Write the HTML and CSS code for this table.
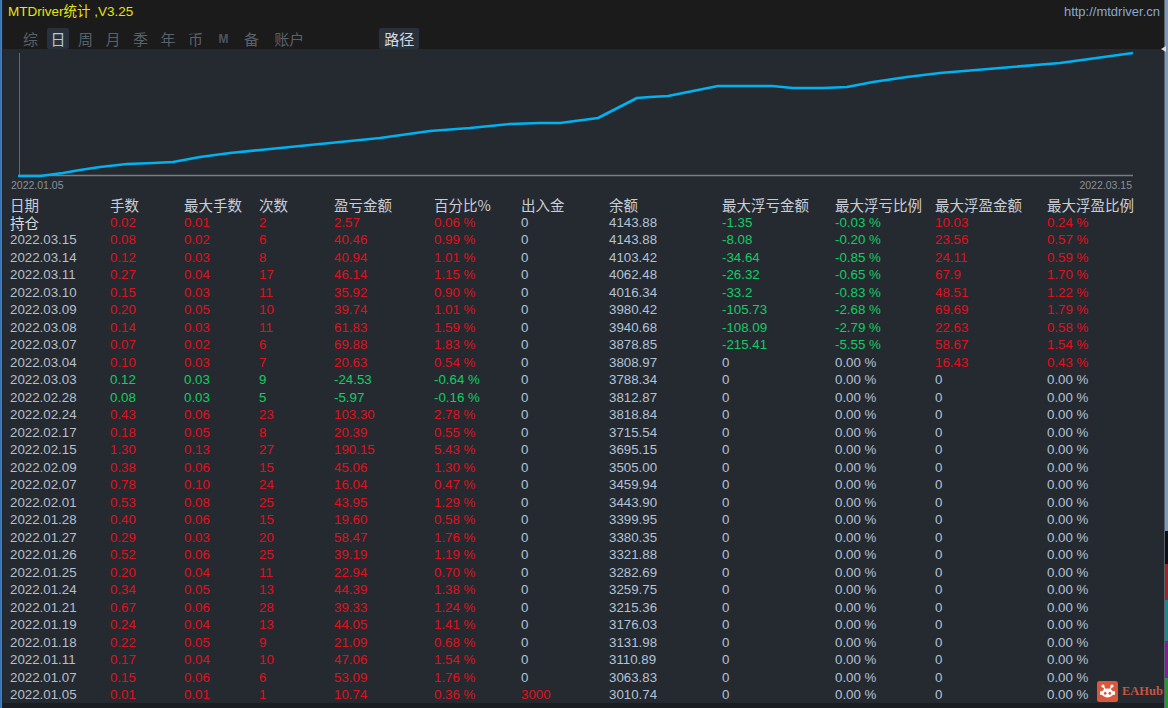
FILE: index.html
```html
<!DOCTYPE html>
<html lang="zh">
<head>
<meta charset="utf-8">
<title>MTDriver统计</title>
<link rel="stylesheet" href="styles.css">
</head>
<body>
<div class="frame">
  <div class="edge-left"></div>
  <div class="main">
    <div class="topbar">
      <span class="title">MTDriver统计 ,V3.25</span>
      <span class="url">http://mtdriver.cn</span>
    </div>
    <div class="tabs">
      <span class="tab">综</span>
      <span class="tab active">日</span>
      <span class="tab">周</span>
      <span class="tab">月</span>
      <span class="tab">季</span>
      <span class="tab">年</span>
      <span class="tab">币</span>
      <span class="tab tab-m">M</span>
      <span class="tab tab-bei">备</span>
      <span class="tab tab-acct">账户</span>
      <span class="tab tab-path">路径</span>
    </div>
    <div class="chart">
      <svg class="chart-svg" width="1161" height="146.75" viewBox="3 49 1161 146.75">
        <line x1="19.5" y1="53" x2="19.5" y2="176" stroke="#666a6e" stroke-width="1"/>
        <line x1="19" y1="175.5" x2="1133" y2="175.5" stroke="#7a7c80" stroke-width="1.6"/>
        <polyline fill="none" stroke="#00b2f0" stroke-width="2.7" stroke-linejoin="round"
          points="18,176 40,176 63,173 80,170 100,167 127,164 153,163 173,162 200,157 230,153 260,150 300,146 340,142 380,138 430,131 470,128 510,124 540,123 560,123 598,118 637,98 650,97 668,96 683,93 718,86 772,86 793,88 823,88 847,87 873,82 907,77 940,73 1000,68 1060,63 1133,53"/>
        <text class="axis-label" x="11" y="188.5">2022.01.05</text>
        <text class="axis-label" x="1132" y="188.5" text-anchor="end">2022.03.15</text>
      </svg>
    </div>
    <div class="table">
      <div class="row head">
        <span>日期</span><span>手数</span><span>最大手数</span><span>次数</span><span>盈亏金额</span><span>百分比%</span><span>出入金</span><span>余额</span><span>最大浮亏金额</span><span>最大浮亏比例</span><span>最大浮盈金额</span><span>最大浮盈比例</span>
      </div>
      <div class="row"><span class="lbl">持仓</span><span class="r">0.02</span><span class="r">0.01</span><span class="r">2</span><span class="r">2.57</span><span class="r">0.06 %</span><span class="n">0</span><span class="n">4143.88</span><span class="g">-1.35</span><span class="g">-0.03 %</span><span class="r">10.03</span><span class="r">0.24 %</span></div>
      <div class="row"><span class="d">2022.03.15</span><span class="r">0.08</span><span class="r">0.02</span><span class="r">6</span><span class="r">40.46</span><span class="r">0.99 %</span><span class="n">0</span><span class="n">4143.88</span><span class="g">-8.08</span><span class="g">-0.20 %</span><span class="r">23.56</span><span class="r">0.57 %</span></div>
      <div class="row"><span class="d">2022.03.14</span><span class="r">0.12</span><span class="r">0.03</span><span class="r">8</span><span class="r">40.94</span><span class="r">1.01 %</span><span class="n">0</span><span class="n">4103.42</span><span class="g">-34.64</span><span class="g">-0.85 %</span><span class="r">24.11</span><span class="r">0.59 %</span></div>
      <div class="row"><span class="d">2022.03.11</span><span class="r">0.27</span><span class="r">0.04</span><span class="r">17</span><span class="r">46.14</span><span class="r">1.15 %</span><span class="n">0</span><span class="n">4062.48</span><span class="g">-26.32</span><span class="g">-0.65 %</span><span class="r">67.9</span><span class="r">1.70 %</span></div>
      <div class="row"><span class="d">2022.03.10</span><span class="r">0.15</span><span class="r">0.03</span><span class="r">11</span><span class="r">35.92</span><span class="r">0.90 %</span><span class="n">0</span><span class="n">4016.34</span><span class="g">-33.2</span><span class="g">-0.83 %</span><span class="r">48.51</span><span class="r">1.22 %</span></div>
      <div class="row"><span class="d">2022.03.09</span><span class="r">0.20</span><span class="r">0.05</span><span class="r">10</span><span class="r">39.74</span><span class="r">1.01 %</span><span class="n">0</span><span class="n">3980.42</span><span class="g">-105.73</span><span class="g">-2.68 %</span><span class="r">69.69</span><span class="r">1.79 %</span></div>
      <div class="row"><span class="d">2022.03.08</span><span class="r">0.14</span><span class="r">0.03</span><span class="r">11</span><span class="r">61.83</span><span class="r">1.59 %</span><span class="n">0</span><span class="n">3940.68</span><span class="g">-108.09</span><span class="g">-2.79 %</span><span class="r">22.63</span><span class="r">0.58 %</span></div>
      <div class="row"><span class="d">2022.03.07</span><span class="r">0.07</span><span class="r">0.02</span><span class="r">6</span><span class="r">69.88</span><span class="r">1.83 %</span><span class="n">0</span><span class="n">3878.85</span><span class="g">-215.41</span><span class="g">-5.55 %</span><span class="r">58.67</span><span class="r">1.54 %</span></div>
      <div class="row"><span class="d">2022.03.04</span><span class="r">0.10</span><span class="r">0.03</span><span class="r">7</span><span class="r">20.63</span><span class="r">0.54 %</span><span class="n">0</span><span class="n">3808.97</span><span class="n">0</span><span class="n">0.00 %</span><span class="r">16.43</span><span class="r">0.43 %</span></div>
      <div class="row"><span class="d">2022.03.03</span><span class="g">0.12</span><span class="g">0.03</span><span class="g">9</span><span class="g">-24.53</span><span class="g">-0.64 %</span><span class="n">0</span><span class="n">3788.34</span><span class="n">0</span><span class="n">0.00 %</span><span class="n">0</span><span class="n">0.00 %</span></div>
      <div class="row"><span class="d">2022.02.28</span><span class="g">0.08</span><span class="g">0.03</span><span class="g">5</span><span class="g">-5.97</span><span class="g">-0.16 %</span><span class="n">0</span><span class="n">3812.87</span><span class="n">0</span><span class="n">0.00 %</span><span class="n">0</span><span class="n">0.00 %</span></div>
      <div class="row"><span class="d">2022.02.24</span><span class="r">0.43</span><span class="r">0.06</span><span class="r">23</span><span class="r">103.30</span><span class="r">2.78 %</span><span class="n">0</span><span class="n">3818.84</span><span class="n">0</span><span class="n">0.00 %</span><span class="n">0</span><span class="n">0.00 %</span></div>
      <div class="row"><span class="d">2022.02.17</span><span class="r">0.18</span><span class="r">0.05</span><span class="r">8</span><span class="r">20.39</span><span class="r">0.55 %</span><span class="n">0</span><span class="n">3715.54</span><span class="n">0</span><span class="n">0.00 %</span><span class="n">0</span><span class="n">0.00 %</span></div>
      <div class="row"><span class="d">2022.02.15</span><span class="r">1.30</span><span class="r">0.13</span><span class="r">27</span><span class="r">190.15</span><span class="r">5.43 %</span><span class="n">0</span><span class="n">3695.15</span><span class="n">0</span><span class="n">0.00 %</span><span class="n">0</span><span class="n">0.00 %</span></div>
      <div class="row"><span class="d">2022.02.09</span><span class="r">0.38</span><span class="r">0.06</span><span class="r">15</span><span class="r">45.06</span><span class="r">1.30 %</span><span class="n">0</span><span class="n">3505.00</span><span class="n">0</span><span class="n">0.00 %</span><span class="n">0</span><span class="n">0.00 %</span></div>
      <div class="row"><span class="d">2022.02.07</span><span class="r">0.78</span><span class="r">0.10</span><span class="r">24</span><span class="r">16.04</span><span class="r">0.47 %</span><span class="n">0</span><span class="n">3459.94</span><span class="n">0</span><span class="n">0.00 %</span><span class="n">0</span><span class="n">0.00 %</span></div>
      <div class="row"><span class="d">2022.02.01</span><span class="r">0.53</span><span class="r">0.08</span><span class="r">25</span><span class="r">43.95</span><span class="r">1.29 %</span><span class="n">0</span><span class="n">3443.90</span><span class="n">0</span><span class="n">0.00 %</span><span class="n">0</span><span class="n">0.00 %</span></div>
      <div class="row"><span class="d">2022.01.28</span><span class="r">0.40</span><span class="r">0.06</span><span class="r">15</span><span class="r">19.60</span><span class="r">0.58 %</span><span class="n">0</span><span class="n">3399.95</span><span class="n">0</span><span class="n">0.00 %</span><span class="n">0</span><span class="n">0.00 %</span></div>
      <div class="row"><span class="d">2022.01.27</span><span class="r">0.29</span><span class="r">0.03</span><span class="r">20</span><span class="r">58.47</span><span class="r">1.76 %</span><span class="n">0</span><span class="n">3380.35</span><span class="n">0</span><span class="n">0.00 %</span><span class="n">0</span><span class="n">0.00 %</span></div>
      <div class="row"><span class="d">2022.01.26</span><span class="r">0.52</span><span class="r">0.06</span><span class="r">25</span><span class="r">39.19</span><span class="r">1.19 %</span><span class="n">0</span><span class="n">3321.88</span><span class="n">0</span><span class="n">0.00 %</span><span class="n">0</span><span class="n">0.00 %</span></div>
      <div class="row"><span class="d">2022.01.25</span><span class="r">0.20</span><span class="r">0.04</span><span class="r">11</span><span class="r">22.94</span><span class="r">0.70 %</span><span class="n">0</span><span class="n">3282.69</span><span class="n">0</span><span class="n">0.00 %</span><span class="n">0</span><span class="n">0.00 %</span></div>
      <div class="row"><span class="d">2022.01.24</span><span class="r">0.34</span><span class="r">0.05</span><span class="r">13</span><span class="r">44.39</span><span class="r">1.38 %</span><span class="n">0</span><span class="n">3259.75</span><span class="n">0</span><span class="n">0.00 %</span><span class="n">0</span><span class="n">0.00 %</span></div>
      <div class="row"><span class="d">2022.01.21</span><span class="r">0.67</span><span class="r">0.06</span><span class="r">28</span><span class="r">39.33</span><span class="r">1.24 %</span><span class="n">0</span><span class="n">3215.36</span><span class="n">0</span><span class="n">0.00 %</span><span class="n">0</span><span class="n">0.00 %</span></div>
      <div class="row"><span class="d">2022.01.19</span><span class="r">0.24</span><span class="r">0.04</span><span class="r">13</span><span class="r">44.05</span><span class="r">1.41 %</span><span class="n">0</span><span class="n">3176.03</span><span class="n">0</span><span class="n">0.00 %</span><span class="n">0</span><span class="n">0.00 %</span></div>
      <div class="row"><span class="d">2022.01.18</span><span class="r">0.22</span><span class="r">0.05</span><span class="r">9</span><span class="r">21.09</span><span class="r">0.68 %</span><span class="n">0</span><span class="n">3131.98</span><span class="n">0</span><span class="n">0.00 %</span><span class="n">0</span><span class="n">0.00 %</span></div>
      <div class="row"><span class="d">2022.01.11</span><span class="r">0.17</span><span class="r">0.04</span><span class="r">10</span><span class="r">47.06</span><span class="r">1.54 %</span><span class="n">0</span><span class="n">3110.89</span><span class="n">0</span><span class="n">0.00 %</span><span class="n">0</span><span class="n">0.00 %</span></div>
      <div class="row"><span class="d">2022.01.07</span><span class="r">0.15</span><span class="r">0.06</span><span class="r">6</span><span class="r">53.09</span><span class="r">1.76 %</span><span class="n">0</span><span class="n">3063.83</span><span class="n">0</span><span class="n">0.00 %</span><span class="n">0</span><span class="n">0.00 %</span></div>
      <div class="row"><span class="d">2022.01.05</span><span class="r">0.01</span><span class="r">0.01</span><span class="r">1</span><span class="r">10.74</span><span class="r">0.36 %</span><span class="r">3000</span><span class="n">3010.74</span><span class="n">0</span><span class="n">0.00 %</span><span class="n">0</span><span class="n">0.00 %</span></div>
    </div>
    <div class="bottombar"></div>
    <div class="eahub">
      <svg class="eahub-icon" width="21" height="21" viewBox="0 0 21 21">
        <rect x="0" y="0" width="21" height="21" rx="2.5" fill="#d9583c"/>
        <circle cx="6" cy="5" r="1.6" fill="#fff"/>
        <circle cx="15" cy="5" r="1.6" fill="#fff"/>
        <line x1="6.5" y1="5.5" x2="8" y2="8.5" stroke="#fff" stroke-width="1.2"/>
        <line x1="14.5" y1="5.5" x2="13" y2="8.5" stroke="#fff" stroke-width="1.2"/>
        <rect x="3" y="10" width="2" height="4" rx="1" fill="#fff"/>
        <rect x="16" y="10" width="2" height="4" rx="1" fill="#fff"/>
        <ellipse cx="10.5" cy="12" rx="6" ry="4.4" fill="#fff"/>
        <ellipse cx="8.2" cy="12.2" rx="1.3" ry="1.5" fill="#d9583c"/>
        <ellipse cx="12.8" cy="12.2" rx="1.3" ry="1.5" fill="#d9583c"/>
      </svg>
      <span class="eahub-text">EAHub</span>
    </div>
    <span class="scroll-arrow"></span>
  </div>
  <div class="edge-right">
    <div class="seg seg-top"></div>
    <div class="seg seg-black"></div>
    <div class="seg seg-red"></div>
    <div class="seg seg-teal"></div>
    <div class="seg seg-purple"></div>
    <div class="seg seg-green"></div>
  </div>
</div>
</body>
</html>
```
FILE: styles.css
```css
* { box-sizing: border-box; }
html, body {
  margin: 0;
  padding: 0;
  width: 1168px;
  height: 708px;
  overflow: hidden;
  background: #252a31;
}
.frame {
  display: flex;
  width: 1168px;
  height: 708px;
}
.edge-left {
  width: 3px;
  flex: none;
  background: linear-gradient(to right, #2f6fb0 0, #4a88c6 2px, #1d2430 2px);
}
.main {
  position: relative;
  width: 1161px;
  flex: none;
  display: flex;
  flex-direction: column;
  background: #252a31;
  font-family: "Liberation Sans", "Noto Sans CJK SC", sans-serif;
}
.topbar {
  height: 28px;
  background: #1b1b1b;
  display: flex;
  justify-content: space-between;
  align-items: flex-start;
  padding: 4px 4px 0 5px;
  line-height: 15px;
}
.title {
  color: #e4e414;
  font-size: 13.5px;
  font-family: "Liberation Sans", "Noto Sans CJK SC", sans-serif;
}
.url {
  color: #86aad2;
  font-size: 13px;
}
.tabs {
  height: 21px;
  background: #1b1b1b;
  display: flex;
  align-items: stretch;
  gap: 5.5px;
  padding-left: 16.5px;
  font-family: "Noto Sans CJK SC", sans-serif;
  font-size: 15px;
}
.tab {
  display: flex;
  align-items: center;
  padding: 0 3.5px;
  color: #59616b;
  line-height: 20px;
  border-radius: 2px;
}
.tab.active {
  background: #28313c;
  color: #b4c6dc;
}
.tab-m {
  font-family: "Liberation Sans", sans-serif;
  font-size: 12px;
  font-weight: bold;
  margin-left: 3px;
  padding: 0 3.5px;
  color: #4d555f;
}
.tab-bei { margin-left: 3px; }
.tab-acct { margin-left: 2.5px; }
.tab-path {
  margin-left: 66px;
  padding: 0 5px;
  background: #29313b;
  color: #d4dae2;
}
.chart {
  height: 146.75px;
  flex: none;
  background: #252a31;
}
.chart-svg { display: block; }
.axis-label {
  font-family: "Liberation Sans", sans-serif;
  font-size: 10.5px;
  fill: #8a9199;
}
.table {
  display: flex;
  flex-direction: column;
  padding-left: 7px;
}
.row {
  display: grid;
  grid-template-columns: 100px 74px 75px 75px 100px 87px 88px 113px 113px 100px 112px 1fr;
  height: 17.5px;
  align-items: center;
  font-size: 13.3px;
  line-height: 15px;
  white-space: nowrap;
}
.row.head {
  font-family: "Noto Sans CJK SC", sans-serif;
  font-size: 14.5px;
  color: #c9ced6;
}
.row.head span { line-height: 15px; }
.lbl {
  font-family: "Noto Sans CJK SC", sans-serif;
  font-size: 14.5px;
  line-height: 15px;
  color: #d6dae0;
}
.d { color: #b7bfc9; }
.r { color: #e0101c; }
.g { color: #14cc62; }
.n { color: #b3c2d6; }
.bottombar {
  flex: 1;
  background: #1a1d21;
}
.eahub {
  position: absolute;
  left: 1094px;
  top: 681px;
  display: flex;
  align-items: center;
  gap: 4px;
}
.eahub-icon { display: block; }
.eahub-text {
  font-family: "Liberation Serif", serif;
  font-weight: bold;
  font-size: 12.5px;
  color: #c7553e;
}
.scroll-arrow {
  position: absolute;
  right: -2px;
  top: 46px;
  width: 0;
  height: 0;
  border-top: 3.5px solid transparent;
  border-bottom: 3.5px solid transparent;
  border-right: 5px solid #d8dde2;
}
.edge-right {
  width: 4px;
  flex: none;
  display: flex;
  flex-direction: column;
  border-left: 1px solid #56636f;
}
.seg-top { height: 531px; background: #7f98b3; }
.seg-black { height: 33px; background: #101010; }
.seg-red { height: 36px; background: #a8201c; }
.seg-teal { height: 41px; background: #128c8c; }
.seg-purple { height: 37px; background: #8a1a9a; }
.seg-green { flex: 1; background: #1ea020; }
```
